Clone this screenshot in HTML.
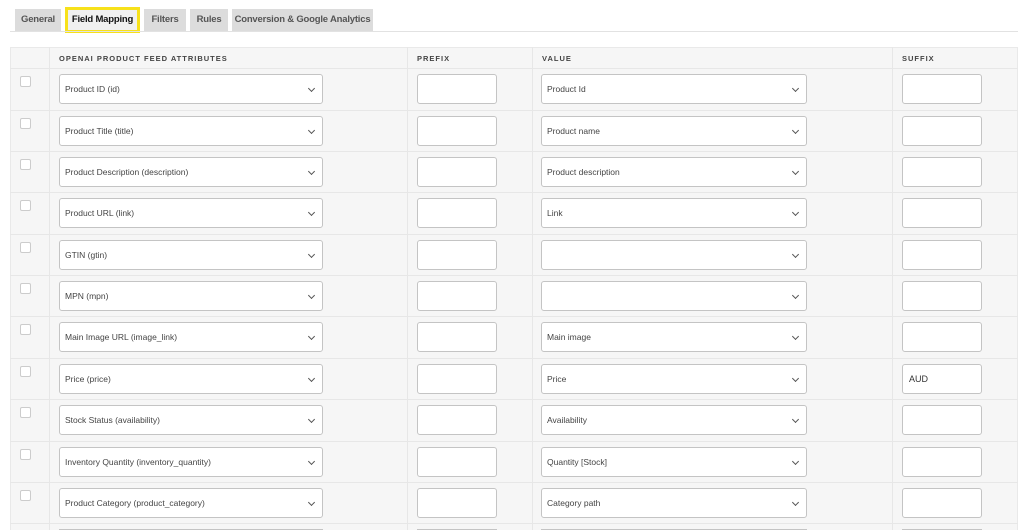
<!DOCTYPE html>
<html><head><meta charset="utf-8"><style>
*{box-sizing:border-box;margin:0;padding:0}
html,body{width:1024px;height:530px;overflow:hidden}
body{background:#fff;font-family:"Liberation Sans",Arial,sans-serif;position:relative}
.tab{position:absolute;top:9px;height:22px;background:#dcdcdc;color:#555;font-size:9.5px;font-weight:bold;line-height:22px;text-align:center;white-space:nowrap;letter-spacing:-0.2px}
.tab.act{background:#f0f0f0;color:#111;border:3px solid #f7e11b;line-height:20px;top:7px;height:26px}
.tline{position:absolute;left:10px;width:1008px;top:31px;height:1px;background:#e2e2e2}
.tbl{position:absolute;left:10px;top:47px;width:1008px;height:483px;background:#f6f6f6;border:1px solid #e9e9e9;border-bottom:none}
.vl{position:absolute;top:47px;height:483px;width:1px;background:#e7e7e7}
.hl{position:absolute;left:10px;width:1008px;height:1px;background:#e7e7e7}
.th{position:absolute;top:54px;font-size:7.5px;font-weight:bold;letter-spacing:1px;color:#444}
.row{position:absolute;left:0;width:1024px;height:42px}
.edge{position:absolute;top:529px;height:1px;background:#c4c4c4}
.cb{position:absolute;left:20px;top:8px;width:11px;height:11px;background:#fff;border:1px solid #ccc;border-radius:2px}
.sel{position:absolute;top:6px;height:30px;background:#fff;border:1px solid #c4c4c4;border-radius:3px;font-size:8.5px;color:#444;line-height:28px;padding-left:5px}
.sel:after{content:"";position:absolute;right:8px;top:11px;width:4px;height:4px;border-right:1.2px solid #555;border-bottom:1.2px solid #555;transform:rotate(45deg)}
.inp{position:absolute;top:6px;width:80px;height:30px;background:#fff;border:1px solid #c4c4c4;border-radius:3px;font-size:9px;color:#333;line-height:28px;padding-left:6px}
</style></head><body>
<div class="tab" style="left:15px;width:46px">General</div>
<div class="tab act" style="left:65px;width:75px">Field Mapping</div>
<div class="tab" style="left:144px;width:42px">Filters</div>
<div class="tab" style="left:190px;width:38px">Rules</div>
<div class="tab" style="left:232px;width:141px">Conversion &amp; Google Analytics</div>
<div class="tline"></div>
<div class="tbl"></div>
<div class="vl" style="left:49px"></div><div class="vl" style="left:407px"></div><div class="vl" style="left:532px"></div><div class="vl" style="left:892px"></div>
<div class="hl" style="top:68px"></div><div class="hl" style="top:110px"></div><div class="hl" style="top:151px"></div><div class="hl" style="top:192px"></div><div class="hl" style="top:234px"></div><div class="hl" style="top:275px"></div><div class="hl" style="top:316px"></div><div class="hl" style="top:358px"></div><div class="hl" style="top:399px"></div><div class="hl" style="top:441px"></div><div class="hl" style="top:482px"></div><div class="hl" style="top:523px"></div>
<div class="th" style="left:59px">OPENAI PRODUCT FEED ATTRIBUTES</div>
<div class="th" style="left:417px">PREFIX</div>
<div class="th" style="left:542px">VALUE</div>
<div class="th" style="left:902px">SUFFIX</div>

<div class="row" style="top:68px"><div class="cb"></div><div class="sel" style="left:59px;width:264px">Product ID (id)</div><div class="inp" style="left:417px"></div><div class="sel" style="left:541px;width:266px">Product Id</div><div class="inp" style="left:902px"></div></div>
<div class="row" style="top:110px"><div class="cb"></div><div class="sel" style="left:59px;width:264px">Product Title (title)</div><div class="inp" style="left:417px"></div><div class="sel" style="left:541px;width:266px">Product name</div><div class="inp" style="left:902px"></div></div>
<div class="row" style="top:151px"><div class="cb"></div><div class="sel" style="left:59px;width:264px">Product Description (description)</div><div class="inp" style="left:417px"></div><div class="sel" style="left:541px;width:266px">Product description</div><div class="inp" style="left:902px"></div></div>
<div class="row" style="top:192px"><div class="cb"></div><div class="sel" style="left:59px;width:264px">Product URL (link)</div><div class="inp" style="left:417px"></div><div class="sel" style="left:541px;width:266px">Link</div><div class="inp" style="left:902px"></div></div>
<div class="row" style="top:234px"><div class="cb"></div><div class="sel" style="left:59px;width:264px">GTIN (gtin)</div><div class="inp" style="left:417px"></div><div class="sel" style="left:541px;width:266px"></div><div class="inp" style="left:902px"></div></div>
<div class="row" style="top:275px"><div class="cb"></div><div class="sel" style="left:59px;width:264px">MPN (mpn)</div><div class="inp" style="left:417px"></div><div class="sel" style="left:541px;width:266px"></div><div class="inp" style="left:902px"></div></div>
<div class="row" style="top:316px"><div class="cb"></div><div class="sel" style="left:59px;width:264px">Main Image URL (image_link)</div><div class="inp" style="left:417px"></div><div class="sel" style="left:541px;width:266px">Main image</div><div class="inp" style="left:902px"></div></div>
<div class="row" style="top:358px"><div class="cb"></div><div class="sel" style="left:59px;width:264px">Price (price)</div><div class="inp" style="left:417px"></div><div class="sel" style="left:541px;width:266px">Price</div><div class="inp" style="left:902px">AUD</div></div>
<div class="row" style="top:399px"><div class="cb"></div><div class="sel" style="left:59px;width:264px">Stock Status (availability)</div><div class="inp" style="left:417px"></div><div class="sel" style="left:541px;width:266px">Availability</div><div class="inp" style="left:902px"></div></div>
<div class="row" style="top:441px"><div class="cb"></div><div class="sel" style="left:59px;width:264px">Inventory Quantity (inventory_quantity)</div><div class="inp" style="left:417px"></div><div class="sel" style="left:541px;width:266px">Quantity [Stock]</div><div class="inp" style="left:902px"></div></div>
<div class="row" style="top:482px;height:41px"><div class="cb"></div><div class="sel" style="left:59px;width:264px">Product Category (product_category)</div><div class="inp" style="left:417px"></div><div class="sel" style="left:541px;width:266px">Category path</div><div class="inp" style="left:902px"></div></div>
<div class="edge" style="left:59px;width:264px"></div>
<div class="edge" style="left:417px;width:80px"></div>
<div class="edge" style="left:541px;width:266px"></div>
<div class="edge" style="left:902px;width:80px"></div>
</body></html>
